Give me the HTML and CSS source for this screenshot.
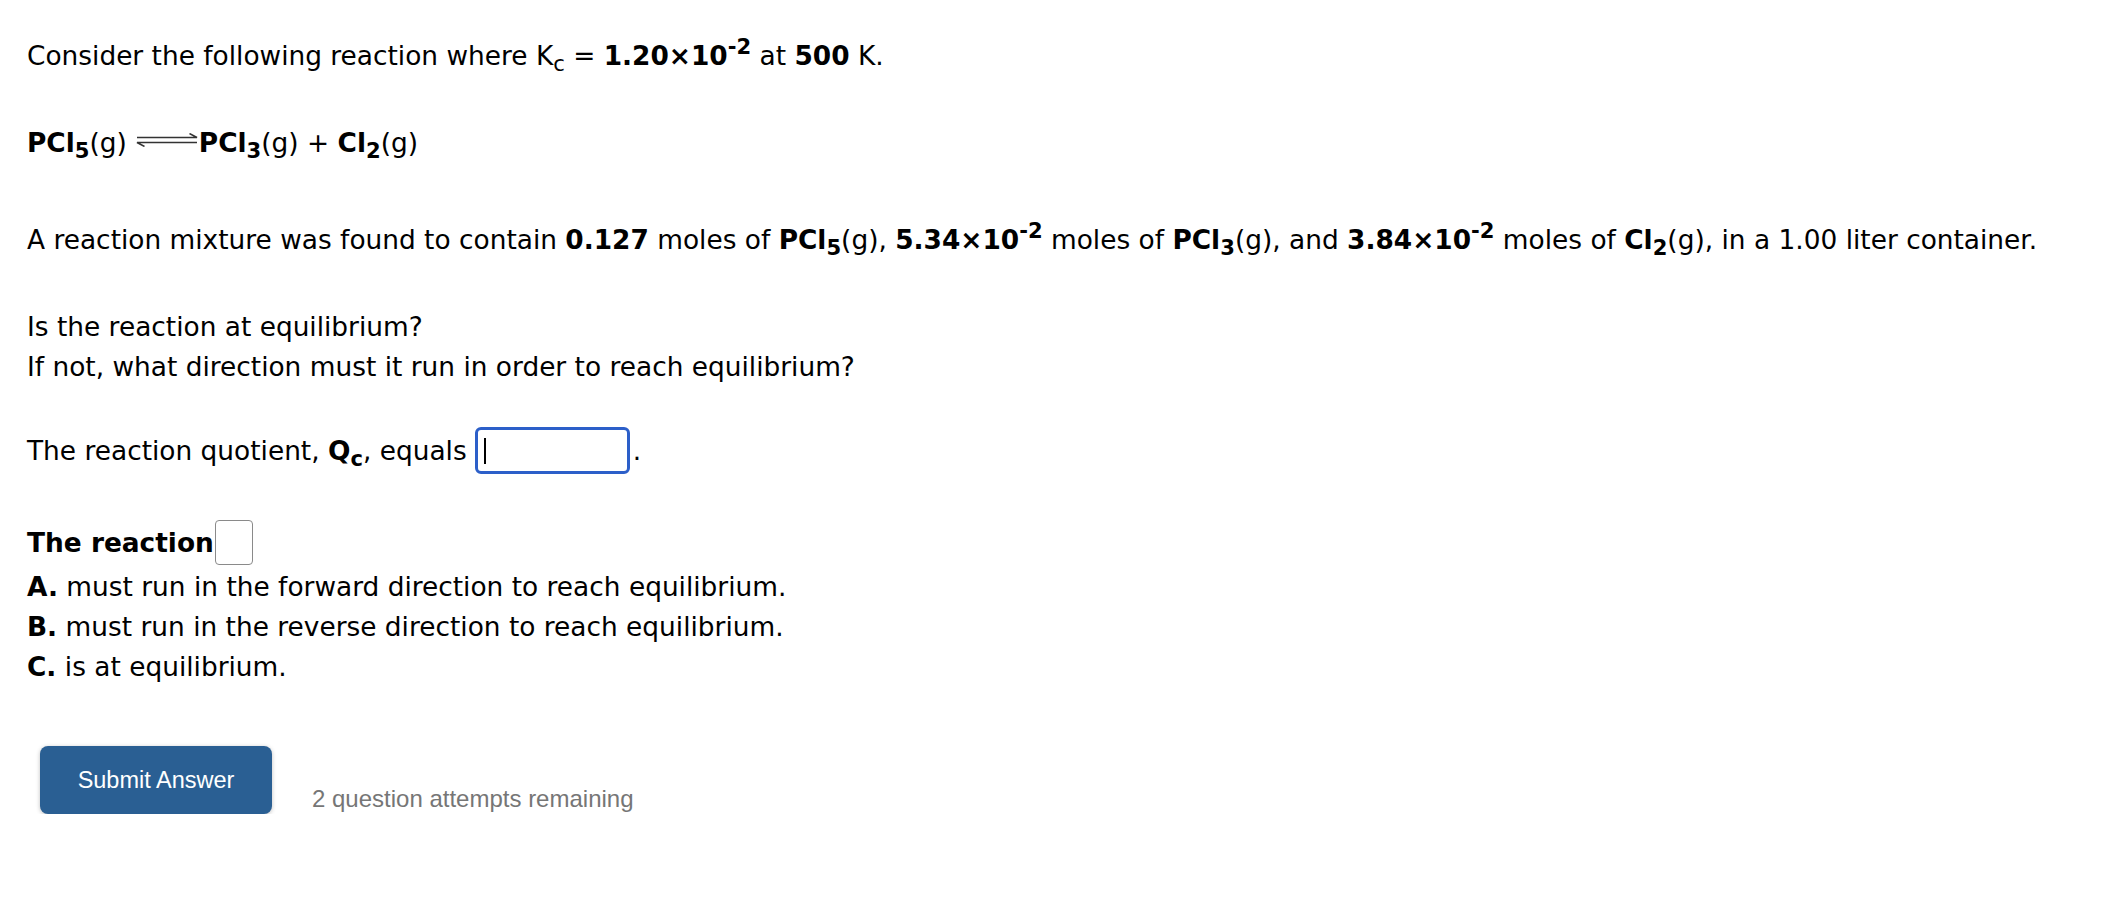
FILE: index.html
```html
<!DOCTYPE html>
<html lang="en">
<head>
<meta charset="utf-8">
<title>Equilibrium question</title>
<link rel="stylesheet" href="styles.css">
</head>
<body>
<div class="question">
  <p class="line p-intro">Consider the following reaction where K<span class="sub">c</span> = <b>1.20×10<span class="sup">-2</span></b> at <b>500</b> K.</p>

  <p class="line p-eq"><b>PCl<span class="sub">5</span></b>(g)<svg class="eq-arrow" width="62" height="14" viewBox="0 0 62 14" aria-hidden="true"><path d="M1 4.5H61L53.5 0.5M61 9.5H1L8.5 13.5" fill="none" stroke="#333" stroke-width="1.5"/></svg><b>PCl<span class="sub">3</span></b>(g) + <b>Cl<span class="sub">2</span></b>(g)</p>

  <p class="line p-mix">A reaction mixture was found to contain <b>0.127</b> moles of <b>PCl<span class="sub">5</span></b>(g), <b>5.34×10<span class="sup">-2</span></b> moles of <b>PCl<span class="sub">3</span></b>(g), and <b>3.84×10<span class="sup">-2</span></b> moles of <b>Cl<span class="sub">2</span></b>(g), in a 1.00 liter container.</p>

  <div class="p-ask">
    <p class="line">Is the reaction at equilibrium?</p>
    <p class="line">If not, what direction must it run in order to reach equilibrium?</p>
  </div>

  <div class="qc-row">
    <span>The reaction quotient, <b>Q<span class="sub">c</span></b>, equals</span>
    <span class="answer-box"><span class="caret"></span></span>
    <span>.</span>
  </div>

  <div class="select-row">
    <b>The reaction</b><span class="select-box"></span>
  </div>
  <p class="line"><b>A.</b> must run in the forward direction to reach equilibrium.</p>
  <p class="line"><b>B.</b> must run in the reverse direction to reach equilibrium.</p>
  <p class="line"><b>C.</b> is at equilibrium.</p>

  <div class="submit-row">
    <button class="submit-btn" type="button">Submit Answer</button>
    <span class="attempts">2 question attempts remaining</span>
  </div>
</div>
</body>
</html>
```

FILE: styles.css
```css
html, body {
  margin: 0;
  padding: 0;
  background: #fff;
}

.question {
  padding: 36px 0 0 27px;
  font-family: "DejaVu Sans", Verdana, sans-serif;
  font-size: 26.4px;
  color: #000;
}

.line {
  margin: 0;
  line-height: 40px;
  white-space: nowrap;
}

b { font-weight: bold; }

.sub {
  font-size: 0.8em;
  vertical-align: -0.3em;
  line-height: 0;
}

.sup {
  font-size: 0.8em;
  vertical-align: 0.5em;
  line-height: 0;
}

.p-eq { margin-top: 47px; }

.eq-arrow {
  margin-left: 9px;
  margin-right: 1px;
  vertical-align: 5px;
}

.p-mix { margin-top: 57px; }

.p-ask { margin-top: 47px; }

.qc-row {
  margin-top: 40px;
  display: flex;
  align-items: center;
  height: 47px;
  white-space: pre;
}

.answer-box {
  box-sizing: border-box;
  width: 155px;
  height: 47px;
  margin-left: 8px;
  margin-right: 3px;
  border: 3px solid #2c5fc9;
  border-radius: 6px;
  display: flex;
  align-items: center;
  padding-left: 6px;
}

.caret {
  width: 2px;
  height: 26px;
  background: #000;
}

.select-row {
  margin-top: 46px;
  display: flex;
  align-items: center;
  height: 45px;
  margin-bottom: 2px;
}

.select-box {
  box-sizing: border-box;
  width: 38px;
  height: 45px;
  border: 1px solid #8a8a8a;
  border-radius: 4px;
  margin-left: 1px;
}

.submit-row {
  margin-top: 59px;
  display: flex;
  align-items: flex-end;
  gap: 40px;
  padding-left: 13px;
}

.submit-btn {
  width: 232px;
  height: 68px;
  border: none;
  border-radius: 8px;
  background: #2a5f93;
  color: #fff;
  font-family: "Liberation Sans", Arial, sans-serif;
  font-size: 23.5px;
  box-shadow: 0 1px 4px rgba(0, 0, 0, 0.25);
  padding: 0;
}

.attempts {
  font-family: "Liberation Sans", Arial, sans-serif;
  font-size: 24px;
  line-height: 28px;
  color: #767676;
  margin-bottom: 1px;
}
```
